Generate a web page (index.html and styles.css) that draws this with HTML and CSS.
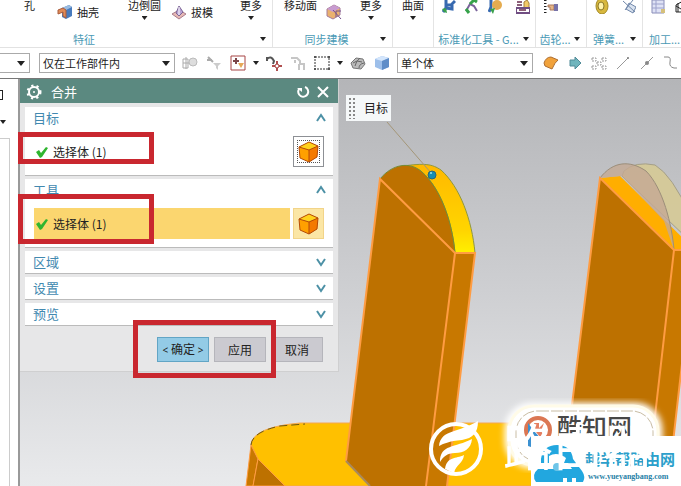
FILE: index.html
```html
<!DOCTYPE html>
<html lang="zh-CN">
<head>
<meta charset="utf-8">
<title>合并</title>
<link rel="stylesheet" href="styles.css">
</head>
<body>
<svg class="defs" aria-hidden="true">
  <symbol id="cube" viewBox="0 0 22 22">
    <path d="M11 1 20 5 19 16 11 21 2 17 1 6Z" fill="#ffa000"/>
    <path d="M11 1 20 5 11 9 1 6Z" fill="#ffd21c"/>
    <path d="M11 9 20 5 19 16 11 21Z" fill="#f47a00"/>
    <path d="M11 1 20 5 19 16 11 21 2 17 1 6ZM1 6 11 9 20 5M11 9V21" fill="none" stroke="#b54a08" stroke-linejoin="round"/>
  </symbol>
  <symbol id="check" viewBox="0 0 12 12">
    <path d="M0 6 3 4 5 7 10 1 12 2 6 11 4 12Z" fill="#2fb52f"/>
  </symbol>
  <symbol id="robot" viewBox="0 0 14 14">
    <path d="M4 0V8L1 12M4 8 10 9V4L13 1M4 5H10" fill="none" stroke="#3769b0" stroke-width="3"/>
    <path d="M0 9 4 8 5 13 2 12Z" fill="#39a04b"/>
  </symbol>
</svg>
<header class="ribbon">
  <section class="group features">
    <div class="tools">
      <span class="tool hole">孔</span>
      <span class="tool low"><svg class="i16" viewBox="0 0 16 16"><path d="M5 4 12 1 15 3V12L9 15 5 13Z" fill="#477bbd"/><path d="M5 4 12 1 15 3 9 6Z" fill="#9bbce0"/><path d="M1 6 6 4 9 6V14L6 12V8L1 10Z" fill="#df8a57" stroke="#a95c3c"/></svg>抽壳</span>
      <span class="tool stack edge">边倒圆<i class="caret"></i></span>
      <span class="tool low"><svg class="i16" viewBox="0 0 16 16"><path d="M1 10 8 6 15 10 8 15Z" fill="#e7b9b4" stroke="#aa7d8d"/><path d="M5 9 8 2 12 8 8 12Z" fill="#b8a3d5" stroke="#7d6596"/><path d="M8 3V11" stroke="#fff"/></svg>拔模</span>
      <span class="tool stack">更多<i class="caret"></i></span>
    </div>
    <h2>特征</h2><i class="caret corner"></i>
  </section>
  <section class="group sync">
    <div class="tools">
      <span class="tool">移动面</span>
      <svg class="i16 lowicon" viewBox="0 0 16 16"><path d="M1 5 8 1 14 4V11L7 15 1 12Z" fill="#eab16e" stroke="#a47c9c"/><path d="M1 5 8 1 14 4 7 8Z" fill="#c89bd1"/><path d="M7 6 15 15M10 13V7H15" fill="none" stroke="#75508c"/></svg>
      <span class="tool stack">更多<i class="caret"></i></span>
    </div>
    <h2>同步建模</h2><i class="caret corner"></i>
  </section>
  <section class="group surface"><div class="tools"><span class="tool stack">曲面<i class="caret"></i></span></div></section>
  <section class="group std">
    <div class="tools icons">
      <svg class="i14"><use href="#robot"/></svg>
      <svg class="i14" viewBox="0 0 14 14"><path d="M1 11 5 4 9 6 12 11" fill="none" stroke="#79639a" stroke-width="2"/><path d="M5 4 9 0 12 2M1 9 4 13" fill="none" stroke="#36a34a" stroke-width="3"/></svg>
      <svg class="i14" viewBox="0 0 14 14"><path d="M3 0V7L1 12" stroke="#3769b0" stroke-width="3" fill="none"/><circle cx="9" cy="5" r="5" fill="#e5ac50"/><path d="M2 9 7 8 5 14Z" fill="#39a04b"/></svg>
      <svg class="i14 divided" viewBox="0 0 14 14"><path d="M0 8H14V13H0Z" fill="#fff" stroke="#704d82" stroke-width="2"/><path d="M1 2H6M1 5H6M3 10H10" stroke="#8d6079" stroke-width="2"/><path d="M8 7V2L11 0 13 3V7" fill="#f1c967" stroke="#a9803c"/></svg>
    </div>
    <h2>标准化工具 - G...</h2><i class="caret corner"></i>
  </section>
  <section class="group gear">
    <div class="tools icons"><svg class="i14" viewBox="0 0 14 14"><path d="M1 0V14" stroke="#222" stroke-width="3" stroke-dasharray="1 2"/><path d="M4 5H10V10H6V7H4Z" fill="#e6b685" stroke="#a87960"/><path d="M10 4H14V11H10Z" fill="#7773a9"/></svg></div>
    <h2>齿轮...</h2><i class="caret corner"></i>
  </section>
  <section class="group spring">
    <div class="tools icons"><svg class="i14" viewBox="0 0 14 14"><ellipse cx="7" cy="6" rx="6" ry="8" fill="#d8b83e" stroke="#a48b29"/><ellipse cx="6" cy="6" rx="3" ry="4" fill="#fff3ab" stroke="#8a7728"/></svg><svg class="i14 divided" viewBox="0 0 14 14"><path d="M1 1 13 12M3 10 11 0M7 3 14 7 11 13 4 9Z" fill="#d9e2ef" stroke="#6f86a9"/></svg></div>
    <h2>弹簧...</h2><i class="caret corner"></i>
  </section>
  <section class="group machining">
    <div class="tools icons"><svg class="i14" viewBox="0 0 14 14"><path d="M1 0H13V13H1Z" fill="#dfe2f5" stroke="#898db8"/><path d="M1 4H13M1 8H13M5 0V13" stroke="#9da2cc"/><path d="M10 9H14V13H10Z" fill="#d5c07b"/></svg><svg class="i14" viewBox="0 0 14 14"><path d="M2 5 9 1M2 5V12H12M2 6 12 12M4 3V12" fill="none" stroke="#222"/></svg></div>
    <h2>加工...</h2><i class="caret corner"></i>
  </section>
</header>
<nav class="toolbar" aria-label="选择条">
  <span class="combo first"><select aria-label="过滤器"><option></option></select></span>
  <span class="combo scope"><select aria-label="选择范围"><option>仅在工作部件内</option></select></span>
  <div class="strip left">
    <svg class="i16" viewBox="0 0 16 16"><path d="M1 4H6V13H1ZM1 8H9M4 2V14" fill="none" stroke="#aaa"/><circle cx="11" cy="7" r="4" fill="#ddd" stroke="#bbb"/></svg>
    <svg class="i16" viewBox="0 0 16 16"><path d="M2 2 7 7M1 5H6" stroke="#aaa" stroke-width="2"/><path d="M7 8H15L12 11V15L10 13V11Z" fill="#ccc"/></svg>
    <svg class="i16" viewBox="0 0 16 16"><path d="M1 1H15V15H1Z" fill="#fff" stroke="#a74545"/><path d="M6 3V9M3 6H9" stroke="#7b4548" stroke-width="2"/><path d="M8 8H14L11 13Z" fill="#e7a858"/></svg>
    <i class="caret"></i>
    <svg class="i16" viewBox="0 0 16 16"><path d="M1 4Q5 0 8 6L7 9M1 2V6" fill="none" stroke="#555" stroke-width="2"/><path d="M11 6V16M6 11H16" stroke="#b15050" stroke-width="2"/><circle cx="11" cy="11" r="2" fill="#fff" stroke="#a54040"/></svg>
    <svg class="i16" viewBox="0 0 16 16"><path d="M1 3H7L10 6V8M5 5V8M9 9H14V15M9 9V15" fill="none" stroke="#c6c6c6" stroke-width="2"/></svg>
    <svg class="i16" viewBox="0 0 16 16"><path d="M1 2H15V14H1Z" fill="none" stroke="#333" stroke-dasharray="2 1"/><path d="M0 1H2V3H0ZM14 1H16V3H14ZM0 13H2V15H0ZM14 13H16V15H14Z" fill="#555"/></svg>
    <i class="caret"></i>
    <svg class="i16" viewBox="0 0 16 16"><path d="M1 8 6 3 13 4 15 9 11 14 3 13Z" fill="#bbb" stroke="#777"/><path d="M3 8 7 6 12 7M5 11Q6 6 10 3M9 13Q9 9 14 8" fill="none" stroke="#666"/></svg>
    <svg class="i16" viewBox="0 0 16 16"><path d="M1 4 8 1 15 3V12L8 15 1 12Z" fill="#9dbfea"/><path d="M1 4 8 1 15 3 8 6Z" fill="#d4e6fc"/><path d="M8 6 15 3V12L8 15Z" fill="#5f8dc8"/></svg>
  </div>
  <span class="combo body"><select aria-label="体类型"><option>单个体</option></select></span>
  <div class="strip right">
    <svg class="i16" viewBox="0 0 16 16"><path d="M1 8Q3 2 8 2L15 5Q12 7 9 14L2 11Z" fill="#f1a23b" stroke="#ad6d30"/></svg>
    <svg class="i16" viewBox="0 0 16 16"><path d="M3 5H8V2L14 8 8 14V11H3Z" fill="#70b5bd" stroke="#508b98"/></svg>
    <svg class="i16" viewBox="0 0 16 16"><path d="M1 3H5V6H1ZM11 3H15V6H11ZM1 11H5V14H1ZM11 11H15V14H11ZM6 7H10V10H6Z" fill="none" stroke="#999" stroke-dasharray="2 1"/></svg>
    <svg class="i16" viewBox="0 0 16 16"><path d="M2 14 13 3" stroke="#999"/><circle cx="13" cy="3" r="1" fill="#777"/></svg>
    <svg class="i16" viewBox="0 0 16 16"><path d="M2 14 14 2" stroke="#999"/><circle cx="8" cy="8" r="2" fill="#888"/></svg>
    <svg class="i16" viewBox="0 0 16 16"><path d="M1 2H5Q8 2 7 7T11 13H14" fill="none" stroke="#888"/></svg>
  </div>
</nav>
<main class="workspace">
  <aside class="rail"><i class="pin"></i><i class="caret"></i><div class="panel"></div></aside>
  <div class="viewport">
    <svg class="scene" viewBox="20 79 661 407" preserveAspectRatio="xMinYMin slice" aria-hidden="true">
      <defs>
        <linearGradient id="sky" x2="0" y2="1"><stop stop-color="#b4b5b8"/><stop offset=".5" stop-color="#cdced1"/><stop offset="1" stop-color="#e9eaec"/></linearGradient>
        <linearGradient id="rim" x2="0" y2="1"><stop stop-color="#ffb800"/><stop offset=".75" stop-color="#ffd500"/><stop offset="1" stop-color="#fff000"/></linearGradient>
        <filter id="glow"><feGaussianBlur stdDeviation="3"/></filter>
      </defs>
      <path d="M20 79H681V486H20Z" fill="url(#sky)"/>
      <path d="M251 444Q254 427 300 423H600V486H285L257 459Z" fill="#ffc000" stroke="#f5a650"/>
      <path d="M251 445Q252 432 280 426L305 424" fill="none" stroke="#6b5712" stroke-dasharray="8 4"/>
      <path d="M251 445 258 459 253 486H246Z" fill="#c87800" stroke="#ff9c42"/>
      <path d="M258 459 285 486H253Z" fill="#bd7100" stroke="#ff9c42"/>
      <path d="M380 179 455 253 426 486H370L346 461Z" fill="#bd7100"/>
      <path d="M455 253H475L447 486H426Z" fill="#c87800"/>
      <path d="M403 166C425 163 432 164 441 170 460 187 472 220 475 253H455C452 220 440 188 422 172 417 168 410 166 403 166Z" fill="url(#rim)" stroke="#91983c"/>
      <path d="M380 179C392 164 410 161 422 172 440 188 452 220 455 253Z" fill="#bd7100" stroke="#738b35"/>
      <path d="M346 461 380 179 455 253H475L447 486M455 253 426 486" fill="none" stroke="#ff9c42" stroke-width="2"/>
      <path d="M346 461 370 486" stroke="#a8895e" stroke-width="2"/>
      <path d="M600 178 674 250 647 486H562Z" fill="#bd7100"/>
      <path d="M674 250H695L668 486H647Z" fill="#c87800"/>
      <path d="M600 178 620 176 695 250H674Z" fill="#ffae00"/>
      <path d="M624 171Q635 161 655 165 672 175 690 215V241L622 176Z" fill="#d6ca94" fill-opacity=".88" stroke="#a49f89"/>
      <path d="M600 178C613 161 630 160 646 171 663 188 672 225 674 250L664 221 622 176Z" fill="#c4a994" fill-opacity=".8"/>
      <path d="M600 178C613 161 630 160 646 171 663 188 672 225 674 250" fill="none" stroke="#9c8e7a"/>
      <path d="M562 486 600 178 674 250H681M674 250 647 486M695 250 668 486" fill="none" stroke="#ff9c42" stroke-width="2"/>
      <path d="M387 122 432 174" stroke="#a49678"/>
      <circle cx="432" cy="175" r="4" fill="#168db3" stroke="#286779"/><circle cx="431" cy="173" r="1" fill="#9ee4ee"/>
      <rect x="507" y="405" width="153" height="61" rx="25" fill="#fff" stroke="#fff" stroke-width="5" filter="url(#glow)"/>
      <rect x="509" y="406" width="149" height="59" rx="25" fill="#fff" stroke="#fffbe8" stroke-width="3"/>
      <rect x="516" y="411" width="137" height="50" rx="21" fill="#fff" stroke="#c9bda4" stroke-dasharray="12 2"/>
      <circle cx="538" cy="430" r="12" fill="none" stroke="#db7753" stroke-width="4"/>
      <path d="M528 423V446Q537 450 544 442L534 431Z" fill="#3b91d1"/><path d="M534 423H539V428L544 423 541 431 545 437H540L536 432Z" fill="#e57f62"/>
      <text class="badge" x="557" y="437">酷知网</text>
      <path d="M531 436H681V486H531Z" fill="#fff"/>
      <path d="M541 459Q543 445 557 445T573 459L582 471Q586 477 583 482H536Q531 475 538 469H572L568 463H541Z" fill="#22a7df"/>
      <path d="M549 456Q557 451 566 458L564 463H549Z" fill="#fff"/><circle cx="557" cy="467" r="4" fill="#6ec5e8"/><path d="M563 482V478H567V482M572 482V478H576V482" fill="#fff"/>
      <text class="site" x="585" y="465">越羊帮路由网</text>
      <text class="url" x="588" y="479">www.yueyangbang.com</text>
      <text class="watermark" x="503" y="466">路由器</text>
      <circle cx="456" cy="449" r="25" fill="none" stroke="#fff" stroke-width="4"/>
      <path d="M439 446C441 429 459 433 478 421 478 433 473 438 462 440 449 441 443 444 439 446ZM440 462C440 444 455 448 472 439 471 449 464 453 455 453 447 453 443 457 440 462ZM445 469C447 456 456 459 464 455 463 464 456 464 454 473Z" fill="#fff"/>
    </svg>
    <form class="dialog">
      <div class="titlebar">
        <svg class="i16" viewBox="0 0 16 16"><circle cx="8" cy="8" r="5" fill="none" stroke="#fff" stroke-width="2"/><circle cx="8" cy="8" r="6" fill="none" stroke="#fff" stroke-width="3" stroke-dasharray="2 3"/><circle cx="8" cy="8" r="1" fill="#fff"/></svg>
        <h1>合并</h1>
        <button type="button" aria-label="重置"><svg class="i14" viewBox="0 0 14 14"><path d="M3 4A5 5 0 1 0 9 2" fill="none" stroke="#fff" stroke-width="2"/><path d="M1 3H6V7Z" fill="#fff"/></svg></button>
        <button type="button" aria-label="关闭"><svg class="i14" viewBox="0 0 14 14"><path d="M2 2 12 12M12 2 2 12" stroke="#fff" stroke-width="2"/></svg></button>
      </div>
      <div class="sections">
        <section class="card open">
          <h3>目标<svg class="chev" viewBox="0 0 12 10"><path d="M2 8 6 2 10 8" /></svg></h3>
          <div class="pick"><span><svg class="tick"><use href="#check"/></svg>选择体 (1)</span><button type="button" class="focused" aria-label="选择目标体"><svg><use href="#cube"/></svg></button></div>
        </section>
        <section class="card open">
          <h3>工具<svg class="chev" viewBox="0 0 12 10"><path d="M2 8 6 2 10 8" /></svg></h3>
          <div class="pick active"><span><svg class="tick"><use href="#check"/></svg>选择体 (1)</span><button type="button" aria-label="选择工具体"><svg><use href="#cube"/></svg></button></div>
        </section>
        <section class="card"><h3>区域<svg class="chev" viewBox="0 0 12 10"><path d="M2 2 6 8 10 2" /></svg></h3></section>
        <section class="card"><h3>设置<svg class="chev" viewBox="0 0 12 10"><path d="M2 2 6 8 10 2" /></svg></h3></section>
        <section class="card"><h3>预览<svg class="chev" viewBox="0 0 12 10"><path d="M2 2 6 8 10 2" /></svg></h3></section>
      </div>
      <div class="actions"><button type="button" class="primary"><small>&lt;</small> 确定 <small>&gt;</small></button><button type="button">应用</button><button type="button">取消</button></div>
      <i class="mark mark-target"></i><i class="mark mark-tool"></i><i class="mark mark-actions"></i>
    </form>
    <div class="callout"><i class="grip"></i>目标</div>
  </div>
</main>
</body>
</html>
```
FILE: styles.css
```css
* { box-sizing: border-box; }
body {
  margin: 0;
  min-height: 100vh;
  display: flex;
  flex-direction: column;
  overflow: hidden;
  background: #fff;
  color: #222;
  font: 11px/14px "Noto Sans CJK SC", sans-serif;
}
h1, h2, h3 { margin: 0; font-weight: 400; }
button, select { font: inherit; color: inherit; }
button { padding: 0; border: 0; background: none; }
svg { display: block; flex: none; }
.defs { position: absolute; width: 0; height: 0; }
.i16 { width: 16px; height: 16px; }
.i14 { width: 14px; height: 14px; }
.caret {
  flex: none;
  width: 6px;
  height: 4px;
  background: #222;
  clip-path: polygon(0 0, 100% 0, 50% 100%);
}

.ribbon { display: flex; height: 48px; border-bottom: 1px solid #e2e2e2; overflow: hidden; white-space: nowrap; }
.group {
  flex: none;
  display: grid;
  grid-template: 32px 14px / 1fr 12px;
  align-items: center;
  border-right: 1px solid #e4e4e4;
}
.tools { grid-column: 1 / 3; display: flex; align-self: start; height: 32px; }
.tool { display: flex; height: 14px; margin-top: -2px; }
.stack { flex-direction: column; align-items: center; gap: 4px; }
.low { align-items: center; gap: 4px; margin-top: 5px; }
.group h2 { color: #4a9ab5; font-size: 11px; line-height: 14px; text-align: center; overflow: hidden; }
.features { width: 273px; }
.features .tools { padding-left: 24px; gap: 10px; }
.features .tool:last-child { margin-left: 17px; }
.features h2 { padding-right: 92px; }
.hole { margin-right: 12px; }
.edge { margin-left: 19px; }
.sync { width: 120px; }
.sync .tools { padding-left: 11px; gap: 9px; }
.sync .tool:last-child { margin-left: 9px; }
.lowicon { margin-top: 4px; }
.surface { width: 41px; }
.surface .tools { justify-content: center; }
.icons { gap: 9px; padding-left: 8px; }
.divided { margin-left: 5px; }
.std { width: 102px; }
.gear { width: 51px; }
.spring { width: 56px; }
.spring .icons { gap: 8px; }
.machining { width: 56px; }

.toolbar { display: flex; align-items: center; height: 31px; border-bottom: 1px solid #777; }
.combo { position: relative; flex: none; height: 20px; }
.combo::after {
  content: "";
  position: absolute;
  right: 5px;
  top: 8px;
  width: 8px;
  height: 5px;
  background: #222;
  clip-path: polygon(0 0, 100% 0, 50% 100%);
  pointer-events: none;
}
.combo select {
  appearance: none;
  width: 100%;
  height: 100%;
  padding: 0 16px 0 3px;
  border: 1px solid #aaa;
  border-radius: 0;
  background: #fff;
}
.first { width: 30px; margin-right: 9px; }
.first select { border-left: 0; }
.scope { width: 136px; }
.body { width: 136px; }
.strip { display: flex; align-items: center; }
.strip.left { gap: 8px; margin: 0 7px; }
.strip.left .caret { margin: 0 -1px; }
.strip.right { gap: 8px; margin-left: 10px; }

.workspace { flex: 1; display: flex; }
.rail {
  display: flex;
  flex-direction: column;
  width: 20px;
  padding-top: 11px;
  border-right: 2px solid #999;
  background: #fff;
}
.pin { width: 3px; height: 10px; border: 1px solid #222; border-left: 0; }
.rail .caret { margin: 20px 0 14px; }
.panel { flex: 1; width: 10px; border: solid #ccc; border-width: 1px 1px 0 0; }
.viewport { position: relative; flex: 1; }
.scene { position: absolute; inset: 0; width: 100%; height: 100%; }
.badge { font: 500 25px "Noto Sans CJK SC", sans-serif; fill: #474747; }
.site { font: 700 15px "Noto Sans CJK SC", sans-serif; fill: #2c9fcb; }
.url { font: 700 8px "Liberation Serif", serif; fill: #267fa6; }
.watermark { font: 400 50px "Noto Sans CJK SC", sans-serif; fill: #fff; }

.dialog {
  position: relative;
  width: 319px;
  background: #e7e7e8;
  border: solid #cfcfd0;
  border-width: 0 1px 1px 0;
}
.titlebar {
  display: flex;
  align-items: center;
  gap: 6px;
  height: 24px;
  padding: 2px 8px 0 6px;
  background: #5b8980;
  color: #fff;
}
.titlebar h1 { flex: 1; padding-left: 3px; font-size: 13px; line-height: 18px; }
.sections { display: flex; flex-direction: column; gap: 3px; padding: 4px 5px 0; }
.card { background: #fff; border-bottom: 1px solid #bbb; }
.card h3 {
  display: flex;
  align-items: center;
  justify-content: space-between;
  height: 22px;
  padding: 0 6px 0 8px;
  color: #4289b0;
  font-size: 13px;
}
.open { padding-bottom: 8px; }
.chev { width: 12px; height: 10px; fill: none; stroke: #4d91a6; stroke-width: 2; }
.pick { display: flex; gap: 3px; margin: 7px 9px 0; font-size: 12px; }
.pick span { flex: 1; display: flex; align-items: center; gap: 5px; padding-left: 2px; }
.tick { width: 12px; height: 12px; }
.pick button { display: grid; place-items: center; width: 31px; height: 31px; }
.pick button svg { width: 22px; height: 22px; }
.pick .focused { border: 1px solid #8d9095; outline: 1px dotted #555; outline-offset: -5px; }
.active span { background: #fbd66f; }
.active button { background: #fbe6a5; border: 1px solid #f2d489; }
.actions { display: flex; justify-content: flex-end; gap: 5px; padding: 11px 15px 9px; }
.actions button { width: 52px; height: 25px; border: 1px solid #b5b5bb; background: #cbcad0; font-size: 12px; }
.actions .primary { border-color: #62a5c5; background: #93cbe6; }
.actions small { font: 10px "Noto Sans", sans-serif; }
.mark { position: absolute; border: 5px solid #c9272f; pointer-events: none; }
.mark-target { left: -2px; top: 53px; width: 136px; height: 32px; }
.mark-tool { left: -2px; top: 115px; width: 136px; height: 50px; }
.mark-actions { left: 113px; top: 241px; width: 143px; height: 58px; }
.callout {
  position: absolute;
  left: 326px;
  top: 16px;
  display: flex;
  align-items: center;
  gap: 9px;
  height: 26px;
  padding: 0 3px 0 2px;
  background: #f5f8f9;
  font-size: 12px;
}
.grip { width: 7px; height: 22px; background: radial-gradient(circle, #888 1px, transparent 1px) 0 0 / 4px 4px; }
```
